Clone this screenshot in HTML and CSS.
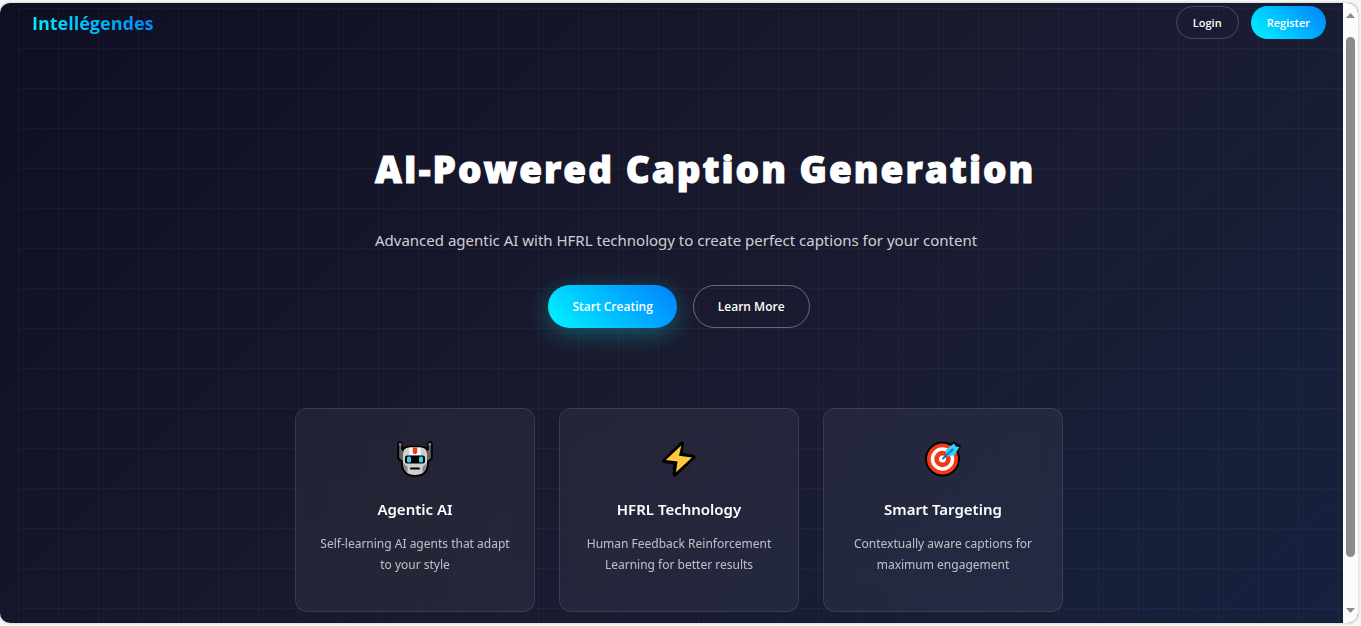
FILE: index.html
```html
<!DOCTYPE html>
<html lang="en">
<head>
<meta charset="utf-8">
<title>Intellégendes</title>
<meta name="viewport" content="width=device-width, initial-scale=1">
<link rel="stylesheet" href="styles.css">
</head>
<body>
<div class="frame">
  <div class="page">
    <div class="grid-overlay"></div>
    <header class="nav">
      <a class="logo" href="#">Intellégendes</a>
      <div class="nav-actions">
        <button class="btn btn-small btn-outline" type="button">Login</button>
        <button class="btn btn-small btn-primary" type="button">Register</button>
      </div>
    </header>
    <main class="content">
      <section class="hero">
        <h1 class="hero-title">AI-Powered Caption Generation</h1>
        <p class="hero-text">Advanced agentic AI with HFRL technology to create perfect captions for your content</p>
        <div class="hero-actions">
          <button class="btn btn-large btn-primary btn-glow" type="button">Start Creating</button>
          <button class="btn btn-large btn-outline btn-outline-strong" type="button">Learn More</button>
        </div>
      </section>
      <section class="features">
        <article class="card">
          <svg class="card-icon" viewBox="0 0 36 36" aria-hidden="true">
            <path d="M3 3V17L6 19.500M33 3V17L30 19.500" fill="none" stroke="#000" stroke-width="5.500" stroke-linejoin="round" stroke-linecap="round"/>
            <path d="M5.500 13Q5.500 6.500 12 6.500H24Q30.500 6.500 30.500 13V21Q30.500 34 18 34Q5.500 34 5.500 21Z" fill="#000" stroke="#000" stroke-width="3.500" stroke-linejoin="round"/>
            <path d="M2.200 4H4.200V8.500L6 10.500V20L2.200 17Z" fill="#636363"/>
            <path d="M33.800 4H31.800V8.500L30 10.500V20L33.800 17Z" fill="#636363"/>
            <circle cx="3.200" cy="3.200" r="1.500" fill="#7a7a7a"/><circle cx="32.800" cy="3.200" r="1.500" fill="#7a7a7a"/>
            <path d="M6 13Q6 6.500 12 6.500H24Q30 6.500 30 13V21Q30 34 18 34Q6 34 6 21Z" fill="#cfcfcf"/>
            <path d="M6 22L10.500 26V31.500Q6.500 28.500 6 22ZM30 22L25.500 26V31.500Q29.500 28.500 30 22Z" fill="#858585"/>
            <path d="M12.500 6.500H23.500V14H12.500Z" fill="#fff"/>
            <path d="M15.800 6.500H20.200V11.500L19 13H17L15.800 11.500Z" fill="#f03a17"/>
            <rect x="8" y="14.500" width="20" height="8" rx="2" fill="#000"/>
            <rect x="10" y="15.500" width="4" height="6" rx="1.500" fill="#31d2f7"/><rect x="22" y="15.500" width="4" height="6" rx="1.500" fill="#31d2f7"/>
            <path d="M14 27.500H22" stroke="#000" stroke-width="2" stroke-linecap="round"/>
          </svg>
          <h2 class="card-title">Agentic AI</h2>
          <p class="card-text">Self-learning AI agents that adapt to your style</p>
        </article>
        <article class="card">
          <svg class="card-icon" viewBox="0 0 36 36" aria-hidden="true">
            <path d="M20.800 2.800L3.500 19.800L14.800 21.400L13.800 33.200L32.300 16L19.500 14Z" fill="#000" stroke="#000" stroke-width="4.500" stroke-linejoin="round"/>
            <path d="M20.300 4.500L4.800 19L16.500 20.500L15 31.200L31 16.500L18 14.800Z" fill="#ffc83d"/>
          </svg>
          <h2 class="card-title">HFRL Technology</h2>
          <p class="card-text">Human Feedback Reinforcement Learning for better results</p>
        </article>
        <article class="card">
          <svg class="card-icon" viewBox="0 0 36 36" aria-hidden="true">
            <circle cx="17.500" cy="18" r="17.500" fill="#000"/>
            <path d="M22 12V8L29.500 2.500L31 5L34 5L30 13L24 14Z" fill="#000" stroke="#000" stroke-width="3.500" stroke-linejoin="round"/>
            <circle cx="17.500" cy="18" r="15.500" fill="#f03a17"/>
            <circle cx="17.500" cy="18" r="10" fill="none" stroke="#fff" stroke-width="3.500"/>
            <circle cx="17.500" cy="18" r="3.500" fill="#fff"/>
            <path d="M21 13.500V8.500L29 2.500L31 5.500L34.500 6L29.500 14L23 15.500Z" fill="#31d2f7"/>
            <path d="M18 17.500L27.500 8.500" stroke="#0078d7" stroke-width="2" stroke-linecap="round"/>
          </svg>
          <h2 class="card-title">Smart Targeting</h2>
          <p class="card-text">Contextually aware captions for maximum engagement</p>
        </article>
      </section>
    </main>
  </div>
  <div class="scrollbar" aria-hidden="true">
    <svg class="arrow" viewBox="0 0 9 5"><path d="M0 5L4.500 0L9 5Z"/></svg>
    <div class="track"><div class="thumb"></div></div>
    <svg class="arrow" viewBox="0 0 9 5"><path d="M0 0L4.500 5L9 0Z"/></svg>
  </div>
</div>
</body>
</html>
```
FILE: styles.css
```css
* {
  box-sizing: border-box;
  margin: 0;
}

body {
  height: 100vh;
  padding: 3px 3px 3px 0;
  background: #f7f7f7;
  color: #fff;
  font-family: "Segoe UI", "Noto Sans", "Open Sans", sans-serif;
  overflow: hidden;
}

.frame {
  position: relative;
  height: 100%;
  overflow: hidden;
  border-radius: 10px;
  box-shadow: 0 0 3px rgba(0, 0, 0, 0.25);
}

.page {
  position: relative;
  height: 100%;
  overflow: hidden;
  background: linear-gradient(135deg, #0f0f23 0%, #1a1a2e 50%, #16213e 100%);
}

.grid-overlay {
  position: absolute;
  inset: 5px 0 0 18px;
  background-image:
    linear-gradient(rgba(255, 255, 255, 0.03) 1px, transparent 1px),
    linear-gradient(90deg, rgba(255, 255, 255, 0.03) 1px, transparent 1px);
  background-size: 40px 40px;
}

.nav {
  position: relative;
  display: flex;
  align-items: center;
  justify-content: space-between;
  padding: 3px 32px;
}

.logo {
  background: linear-gradient(45deg, #00f5ff, #0080ff);
  background-clip: text;
  -webkit-background-clip: text;
  color: transparent;
  font-family: "Segoe UI", "Open Sans", sans-serif;
  font-size: 18px;
  font-weight: 700;
  text-decoration: none;
}

.nav-actions {
  display: flex;
  gap: 12px;
}

.btn {
  border: 0;
  color: #fff;
  font-family: "Segoe UI", "Open Sans", sans-serif;
  font-weight: 600;
  white-space: nowrap;
}

.btn-small {
  height: 33px;
  padding: 0 16px;
  border-radius: 17px;
  font-size: 11px;
}

.btn-large {
  height: 43px;
  padding: 0 24px;
  border-radius: 22px;
  font-size: 12px;
}

.btn-primary {
  background: linear-gradient(45deg, #00f5ff, #0080ff);
}

.btn-glow {
  box-shadow: 0 6px 24px rgba(0, 245, 255, 0.3);
}

.btn-outline {
  border: 1px solid rgba(255, 255, 255, 0.2);
  background: transparent;
}

.btn-outline-strong {
  border-color: rgba(255, 255, 255, 0.35);
}

.content {
  position: relative;
  display: flex;
  flex-direction: column;
  align-items: center;
  gap: 80px;
  padding: 99px 32px 0;
}

.hero {
  width: 100%;
  max-width: 608px;
}

.hero-title {
  font-family: "Segoe UI", "Open Sans", sans-serif;
  font-size: 37px;
  font-weight: 900;
  line-height: 56px;
  letter-spacing: 2px;
  white-space: nowrap;
  -webkit-text-stroke: 1px #fff;
}

.hero-text {
  margin-top: 30px;
  color: rgba(255, 255, 255, 0.8);
  font-size: 15px;
  line-height: 26px;
  white-space: nowrap;
}

.hero-actions {
  display: flex;
  justify-content: center;
  gap: 16px;
  margin-top: 32px;
}

.features {
  display: grid;
  grid-template-columns: repeat(3, 1fr);
  gap: 24px;
  width: 100%;
  max-width: 768px;
}

.card {
  display: flex;
  flex-direction: column;
  align-items: center;
  padding: 32px 20px 36px;
  border: 1px solid rgba(255, 255, 255, 0.1);
  border-radius: 12px;
  background: rgba(255, 255, 255, 0.05);
  backdrop-filter: blur(10px);
  text-align: center;
}

.card-icon {
  width: 36px;
  height: 36px;
}

.card-title {
  margin-top: 20px;
  font-size: 15px;
  font-weight: 600;
  line-height: 24px;
}

.card-text {
  margin-top: 12px;
  color: rgba(255, 255, 255, 0.7);
  font-size: 12px;
  line-height: 21px;
}

.scrollbar {
  position: absolute;
  inset: 0 0 0 auto;
  display: flex;
  flex-direction: column;
  align-items: center;
  width: 15px;
  padding: 10px 0;
  background: #fcfcfc;
}

.arrow {
  width: 9px;
  height: 5px;
  fill: #8b8b8b;
}

.track {
  flex: 1;
  width: 9px;
  padding: 19px 0 0;
}

.thumb {
  height: 91%;
  border-radius: 5px;
  background: #8b8b8b;
}
```
